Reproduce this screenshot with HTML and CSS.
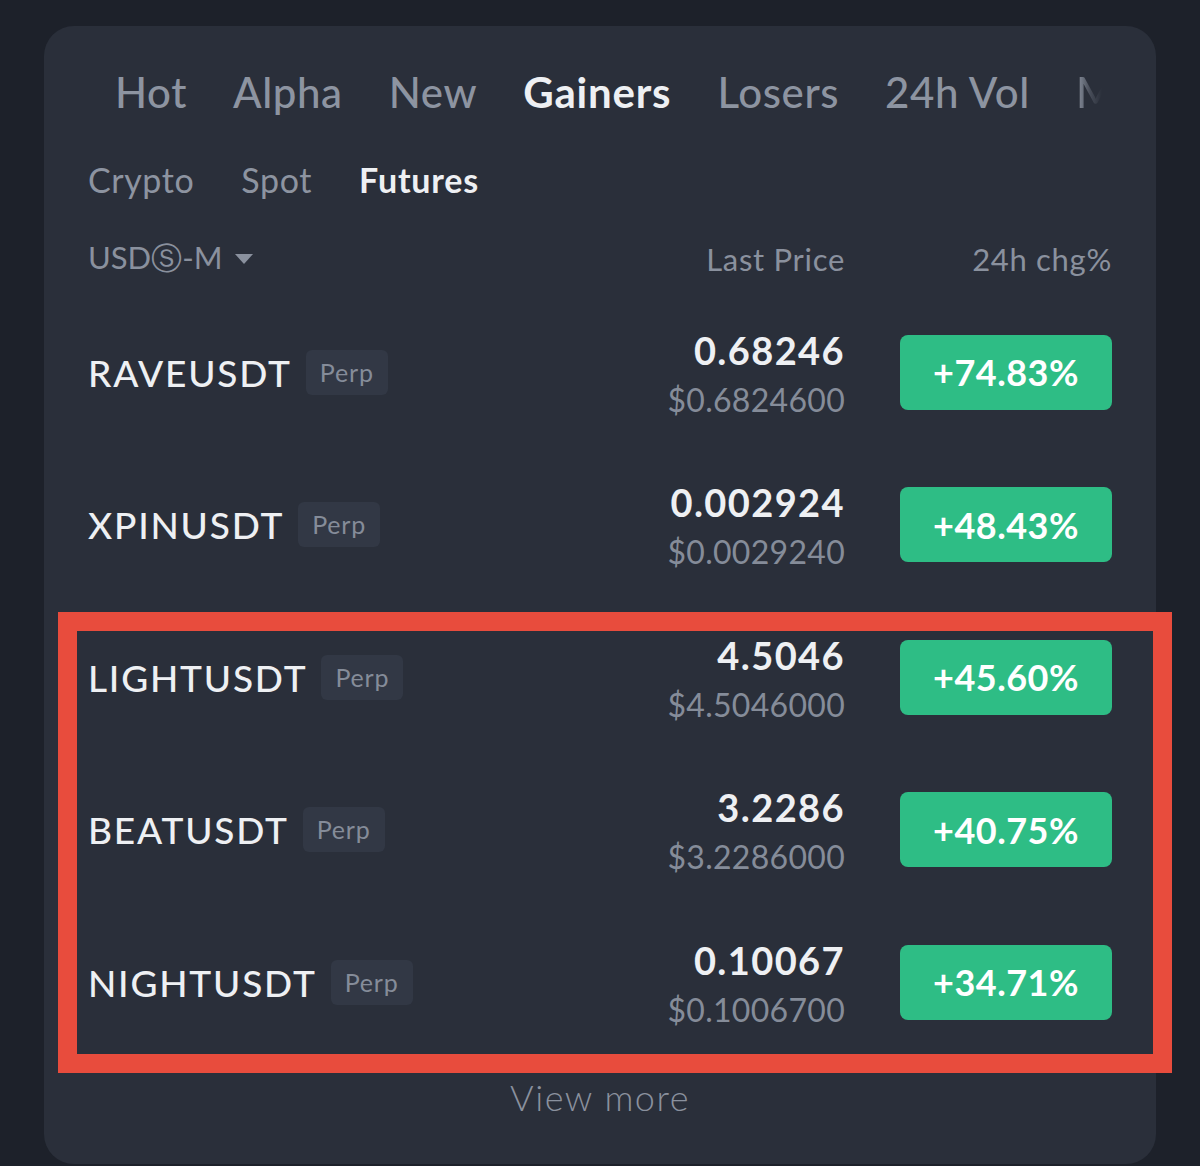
FILE: index.html
```html
<!DOCTYPE html>
<html>
<head>
<meta charset="utf-8">
<link rel="stylesheet" href="styles.css">
</head>
<body>
<div class="page">
  <div class="card">
    <div class="tabs">
      <span class="tab">Hot</span>
      <span class="tab">Alpha</span>
      <span class="tab">New</span>
      <span class="tab active">Gainers</span>
      <span class="tab">Losers</span>
      <span class="tab">24h Vol</span>
      <span class="tab fade">M</span>
    </div>
    <div class="subtabs">
      <span class="subtab">Crypto</span>
      <span class="subtab">Spot</span>
      <span class="subtab active">Futures</span>
    </div>
    <div class="header">
      <div class="hdr-left">USDⓈ-M <span class="caret"></span></div>
      <div class="hdr-price">Last Price</div>
      <div class="hdr-chg">24h chg%</div>
    </div>
    <div class="rows">
      <div class="row">
        <div class="sym"><span class="name">RAVEUSDT</span><span class="perp">Perp</span></div>
        <div class="price"><div class="last">0.68246</div><div class="usd">$0.6824600</div></div>
        <div class="chg">+74.83%</div>
      </div>
      <div class="row">
        <div class="sym"><span class="name">XPINUSDT</span><span class="perp">Perp</span></div>
        <div class="price"><div class="last">0.002924</div><div class="usd">$0.0029240</div></div>
        <div class="chg">+48.43%</div>
      </div>
      <div class="row">
        <div class="sym"><span class="name">LIGHTUSDT</span><span class="perp">Perp</span></div>
        <div class="price"><div class="last">4.5046</div><div class="usd">$4.5046000</div></div>
        <div class="chg">+45.60%</div>
      </div>
      <div class="row">
        <div class="sym"><span class="name">BEATUSDT</span><span class="perp">Perp</span></div>
        <div class="price"><div class="last">3.2286</div><div class="usd">$3.2286000</div></div>
        <div class="chg">+40.75%</div>
      </div>
      <div class="row">
        <div class="sym"><span class="name">NIGHTUSDT</span><span class="perp">Perp</span></div>
        <div class="price"><div class="last">0.10067</div><div class="usd">$0.1006700</div></div>
        <div class="chg">+34.71%</div>
      </div>
    </div>
    <div class="more">View more</div>
  </div>
  <div class="highlight"></div>
</div>
</body>
</html>
```

FILE: styles.css
```css
* { box-sizing: border-box; }
html, body {
  margin: 0;
  padding: 0;
  background: #1d212a;
  overflow: hidden;
}
body {
  font-family: Lato, "Open Sans", "Liberation Sans", sans-serif;
  width: 1200px;
  height: 1166px;
}
.page {
  position: relative;
  width: 1200px;
  height: 1166px;
  padding-top: 26px;
}
.card {
  margin: 0 44px;
  height: 1138px;
  background: #2a2f3a;
  border-radius: 30px;
  padding: 36px 44px 0 44px;
}
.tabs {
  display: flex;
  gap: 46px;
  height: 60px;
  align-items: center;
  padding-left: 27px;
  white-space: nowrap;
}
.tab {
  font-size: 42px;
  color: #8d94a1;
  font-weight: 500;
  letter-spacing: 0.6px;
  flex: none;
}
.tab.active {
  color: #eef0f3;
  font-weight: 700;
  letter-spacing: 0.8px;
}
.tab.fade {
  color: transparent;
  background: linear-gradient(to right, #8d94a1 0%, rgba(141,148,161,0.3) 35%, rgba(141,148,161,0) 65%);
  -webkit-background-clip: text;
  background-clip: text;
}
.subtabs {
  margin-top: 32px;
  display: flex;
  gap: 47px;
  height: 50px;
  align-items: center;
}
.subtab {
  font-size: 34px;
  color: #8d94a1;
  letter-spacing: 0.6px;
}
.subtab.active {
  color: #eef0f3;
  font-weight: 700;
  letter-spacing: 0.8px;
}
.header {
  margin-top: 35px;
  height: 40px;
  display: flex;
  align-items: center;
  font-size: 31px;
  color: #8a919e;
  letter-spacing: 0.7px;
}
.hdr-left {
  flex: 1;
  display: flex;
  align-items: center;
  letter-spacing: 0;
}
.caret {
  display: inline-block;
  margin-left: 12px;
  width: 0;
  height: 0;
  border-left: 9px solid transparent;
  border-right: 9px solid transparent;
  border-top: 10px solid #8a919e;
}
.hdr-price {
  width: 300px;
  text-align: right;
  margin-right: -1px;
}
.hdr-chg {
  width: 268px;
  text-align: right;
}
.rows {
  margin-top: 17px;
}
.row {
  height: 152.5px;
  display: flex;
  align-items: center;
}
.sym {
  flex: 1;
  display: flex;
  align-items: center;
}
.name {
  font-size: 37px;
  font-weight: 500;
  color: #eef0f3;
  letter-spacing: 1.8px;
}
.perp {
  margin-left: 14px;
  height: 45px;
  line-height: 45px;
  padding: 0 14px;
  font-size: 25px;
  color: #858c99;
  background: #323845;
  border-radius: 6px;
  letter-spacing: 0.8px;
}
.price {
  width: 300px;
  padding-top: 11px;
  text-align: right;
  display: flex;
  flex-direction: column;
  align-items: flex-end;
}
.last {
  font-size: 38px;
  font-weight: 700;
  color: #eef0f3;
  line-height: 44px;
  letter-spacing: 1.4px;
  margin-right: -1px;
}
.usd {
  font-size: 32px;
  color: #858c99;
  line-height: 56px;
  letter-spacing: 0.3px;
  margin-right: -1px;
}
.chg {
  margin-left: 56px;
  width: 212px;
  height: 75px;
  border-radius: 8px;
  background: #2ebd85;
  color: #ffffff;
  font-size: 36px;
  font-weight: 700;
  display: flex;
  align-items: center;
  justify-content: center;
  letter-spacing: 0.5px;
}
.more {
  margin-top: 18px;
  text-align: center;
  font-size: 36px;
  font-weight: 300;
  color: #8a919e;
  height: 40px;
  line-height: 40px;
  letter-spacing: 1.5px;
}
.highlight {
  position: absolute;
  left: 58px;
  top: 612px;
  width: 1114px;
  height: 461px;
  border: 19px solid #e84c3d;
}
```
